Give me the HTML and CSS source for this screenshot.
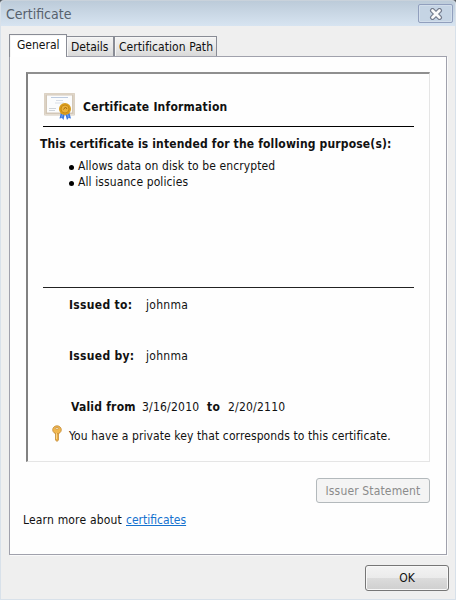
FILE: index.html
```html
<!DOCTYPE html>
<html lang="en">
<head>
    <meta charset="UTF-8">
    <meta name="viewport" content="width=device-width, initial-scale=1.0">
    <title>Certificate</title>
    <link rel="stylesheet" href="styles.css">
</head>
<body>
    <div class="window">
        <div class="titlebar">
            <span class="title">Certificate</span>
            <button class="close" type="button" aria-label="Close">
                <svg width="14" height="12" viewBox="0 0 14 12">
                    <path d="M3.500 2.500L10.500 9.500M10.500 2.500L3.500 9.500" stroke="#737b8c" stroke-width="5" stroke-linecap="round"/>
                    <path d="M3.500 2.500L10.500 9.500M10.500 2.500L3.500 9.500" stroke="#fafafa" stroke-width="2.700" stroke-linecap="round"/>
                </svg>
            </button>
        </div>

        <div class="tabs">
            <div class="tab active"><span>General</span></div>
            <div class="tab details"><span>Details</span></div>
            <div class="tab path"><span>Certification Path</span></div>
        </div>

        <div class="page">
            <div class="info">
                <div class="heading">
                    <svg class="cert-icon" width="34" height="28" viewBox="0 0 34 28">
                        <rect x="1" y="1" width="31" height="22.5" rx="1" fill="#d2c7b7"/>
                        <rect x="2" y="2" width="29" height="20.5" fill="none" stroke="#e5ddd2" stroke-width="1"/>
                        <rect x="4" y="3.5" width="25" height="17" fill="#fbfcfd"/>
                        <path d="M8 5.5h17" stroke="#bdcbe0"/>
                        <path d="M13 8.5h7M12 11h9" stroke="#d8dee7"/>
                        <path d="M6 16.5h7M6 18.5h6" stroke="#ced3d9"/>
                        <path d="M18 20l-1.500 6.500 2.500-.5 1.500 2 1.500-7zM22 21l2 7 1.500-2 2.500 .5-2-7z" fill="#3b78e0"/>
                        <path d="M19.500 22l-.8 3.500M24.500 22l1 3.500" stroke="#79abf4"/>
                        <circle cx="22" cy="17" r="6" fill="#d99c1c"/>
                        <circle cx="22" cy="17" r="4" fill="#e9b13a" stroke="#c88a16"/>
                        <path d="M20.500 17.500l2-2.500 1.500 2" stroke="#a96c10" fill="none"/>
                    </svg>
                    <b>Certificate Information</b>
                </div>
                <b class="purpose">This certificate is intended for the following purpose(s):</b>
                <ul>
                    <li><span>Allows data on disk to be encrypted</span></li>
                    <li><span>All issuance policies</span></li>
                </ul>
                <div class="details-list">
                    <p><b>Issued to:</b><span class="name">johnma</span></p>
                    <p><b>Issued by:</b><span class="name">johnma</span></p>
                    <p class="valid"><b class="from">Valid from</b><span class="date">3/16/2010</span><b class="to">to</b><span class="date">2/20/2110</span></p>
                </div>
                <div class="key-row">
                    <svg width="12" height="17" viewBox="0 0 12 17">
                        <path d="M4.500 7h3v8l-1.500 1.500L4.500 15z" fill="#edae42" stroke="#b9832e" stroke-width=".7"/>
                        <ellipse cx="6" cy="4.800" rx="4.300" ry="4" fill="#f1b74e" stroke="#c28a37" stroke-width=".8"/>
                        <ellipse cx="6" cy="3.300" rx="1.700" ry=".9" fill="#fff2cf" stroke="#b88239" stroke-width=".6"/>
                        <path d="M5.500 8v6" stroke="#ffe09a" stroke-width=".8"/>
                    </svg>
                    <span>You have a private key that corresponds to this certificate.</span>
                </div>
            </div>
            <button class="issuer" type="button" disabled><span>Issuer Statement</span></button>
            <div class="learn"><span class="learn-text">Learn more about</span><a href="#">certificates</a></div>
        </div>
        <button class="ok" type="button"><span>OK</span></button>
    </div>
</body>
</html>
```

FILE: styles.css
```css
* {
    box-sizing: border-box;
}
body {
    margin: 0;
    background: #50565d;
    font-family: "DejaVu Sans Condensed", "DejaVu Sans", sans-serif;
    font-stretch: condensed;
    font-size: 12px;
    line-height: 16px;
    color: #111;
    white-space: nowrap;
}
.window {
    width: 456px;
    height: 600px;
    background: #efefef;
    border: 1px solid #d8e1ea;
    border-top-color: #c9d2db;
    border-radius: 4px 4px 0 0;
    display: flex;
    flex-direction: column;
    overflow: hidden;
}
button {
    font: inherit;
    padding: 0;
    display: flex;
    align-items: center;
    justify-content: center;
}
svg {
    display: block;
    fill: none;
    flex: none;
}
.titlebar {
    height: 25px;
    flex: none;
    display: flex;
    justify-content: space-between;
    padding: 3px 2px 0 5px;
    background: linear-gradient(#bccbd9, #d7e4f1);
}
.title {
    font-size: 14px;
    line-height: 20px;
    color: #56616d;
}
.close {
    width: 35px;
    height: 19px;
    border: 1px solid #919fbd;
    border-radius: 2px;
    background: #c5d4e4;
    box-shadow: inset 0 0 0 1px #d2deeb;
}
.tabs {
    display: flex;
    align-items: flex-end;
    height: 30px;
    flex: none;
    margin-left: 8px;
    position: relative;
}
.tab {
    height: 20px;
    padding: 2px 0 0 4px;
    border: 1px solid #898c95;
    border-bottom: 0;
    background: linear-gradient(#f3f3f3, #e9e9e9 50%, #d9d9d9);
    box-shadow: inset 1px 1px 0 #f6f6f6;
}
.tab.active {
    width: 58px;
    height: 23px;
    padding: 2px 0 0 7px;
    margin-bottom: -1px;
    background: #fff;
}
.tab.details {
    width: 47px;
    border-left: 0;
}
.tab.path {
    width: 103px;
    padding-left: 4px;
    letter-spacing: 0.06px;
}
.page {
    width: 438px;
    height: 499px;
    flex: none;
    margin-left: 8px;
    padding: 15px 16px 0;
    border: 1px solid #a0a1ac;
    background: #fefefe;
    box-shadow: 1px 1px 0 #fafafa;
    display: flex;
    flex-direction: column;
}
.info {
    width: 404px;
    height: 390px;
    flex: none;
    border: 1px solid #e5e5e5;
    border-top: 2px solid #8f8f8f;
    border-left: 2px solid #828282;
    padding: 18px 15px 0 12px;
    letter-spacing: 0.1px;
}
.heading {
    height: 35px;
    margin-left: 3px;
    border-bottom: 1px solid #000;
    display: flex;
}
.heading b {
    margin: 7px 0 0 6px;
    letter-spacing: 0.22px;
}
.purpose {
    display: block;
    margin-top: 9px;
    letter-spacing: 0.16px;
}
ul {
    list-style: none;
    height: 129px;
    margin: 6px 0 0 28px;
    padding: 0;
}
li {
    display: flex;
    align-items: center;
}
li::before {
    content: "";
    width: 5px;
    height: 5px;
    margin: 2px 4px 0 1px;
    border-radius: 50%;
    background: #000;
}
.details-list {
    margin-left: 3px;
    padding-top: 9px;
    border-top: 1px solid #222;
    letter-spacing: 0.3px;
}
.details-list p {
    display: flex;
    height: 51px;
    margin: 0 0 0 26px;
}
.details-list b {
    width: 77px;
}
.details-list .valid {
    height: 29px;
    margin-left: 28px;
    letter-spacing: 0.22px;
}
.details-list .from {
    width: 71px;
}
.details-list .to {
    width: 21px;
    margin-left: 8px;
}
.date {
    width: 57px;
}
.key-row {
    display: flex;
    margin-left: 11px;
}
.key-row svg {
    margin: -3px 6px 0 0;
}
.issuer {
    width: 114px;
    height: 25px;
    margin: 16px 0 0;
    align-self: flex-end;
    color: #8b8b8b;
    background: #f4f4f4;
    border: 1px solid #b3b9bc;
    border-radius: 3px;
    letter-spacing: 0.15px;
}
.learn {
    display: flex;
    margin: 9px 0 0 -3px;
}
.learn-text {
    width: 103px;
    letter-spacing: 0.18px;
}
.learn a {
    color: #1672cf;
}
.ok {
    width: 84px;
    height: 26px;
    margin: 10px 6px 0 0;
    align-self: flex-end;
    color: #111;
    border: 1px solid #767676;
    border-radius: 3px;
    background: linear-gradient(#f3f3f3, #ebebeb 48%, #dcdcdc 50%, #cfcfcf);
    box-shadow: inset 0 0 0 1px #f8f8f8;
}
```
